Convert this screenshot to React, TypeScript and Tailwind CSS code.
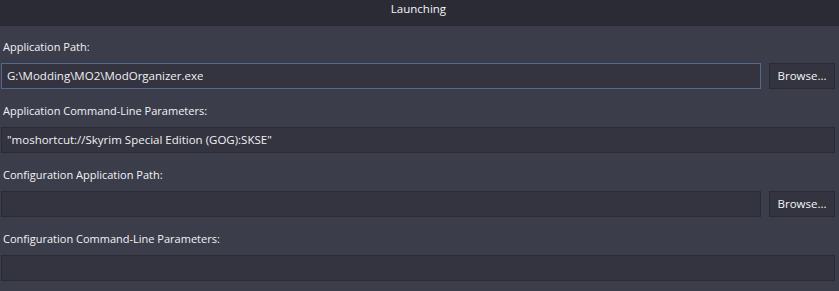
const font = { fontFamily: '"Open Sans", "Noto Sans", sans-serif' };

function Field({ value, focused }: { value?: string; focused?: boolean }) {
  return (
    <div
      className={
        'flex h-[26px] min-w-0 flex-1 items-center border bg-[#333440] px-[5px] text-[11.5px] font-medium text-[#f0f0f4] ' +
        (focused ? 'border-[#56698c]' : 'border-[#2a2b35]')
      }
    >
      <span className="truncate">{value}</span>
    </div>
  );
}

function BrowseButton() {
  return (
    <button className="flex h-[26px] w-[66px] shrink-0 items-center justify-center border border-[#2a2b35] bg-[#333440] text-[11.5px] font-medium text-[#f4f4f8]">
      Browse...
    </button>
  );
}

function Row({
  label,
  value,
  browse,
  focused,
  first,
}: {
  label: string;
  value?: string;
  browse?: boolean;
  focused?: boolean;
  first?: boolean;
}) {
  return (
    <div className="flex flex-col">
      <div
        className={
          'pl-[2px] text-[11px] font-medium leading-[16px] text-[#f2f2f6] ' +
          (first ? 'h-[37px] pt-[13px]' : 'h-[38px] pt-[14px]')
        }
      >
        {label}
      </div>
      <div className="flex gap-[8px]">
        <Field value={value} focused={focused} />
        {browse && <BrowseButton />}
      </div>
    </div>
  );
}

export default function App() {
  return (
    <div className="h-[291px] w-[839px] overflow-hidden bg-[#3c3d4a]" style={font}>
      <div className="flex h-[26px] justify-center bg-[#2b2b35] pt-[1px] text-[11.5px] font-medium leading-[16px] text-[#f4f4f8]">
        <span className="pr-[2px]">Launching</span>
      </div>
      <div className="flex flex-col pl-[1px] pr-[4px]">
        <Row first label="Application Path:" value="G:\Modding\MO2\ModOrganizer.exe" browse focused />
        <Row label="Application Command-Line Parameters:" value={'"moshortcut://Skyrim Special Edition (GOG):SKSE"'} />
        <Row label="Configuration Application Path:" browse />
        <Row label="Configuration Command-Line Parameters:" />
      </div>
    </div>
  );
}
